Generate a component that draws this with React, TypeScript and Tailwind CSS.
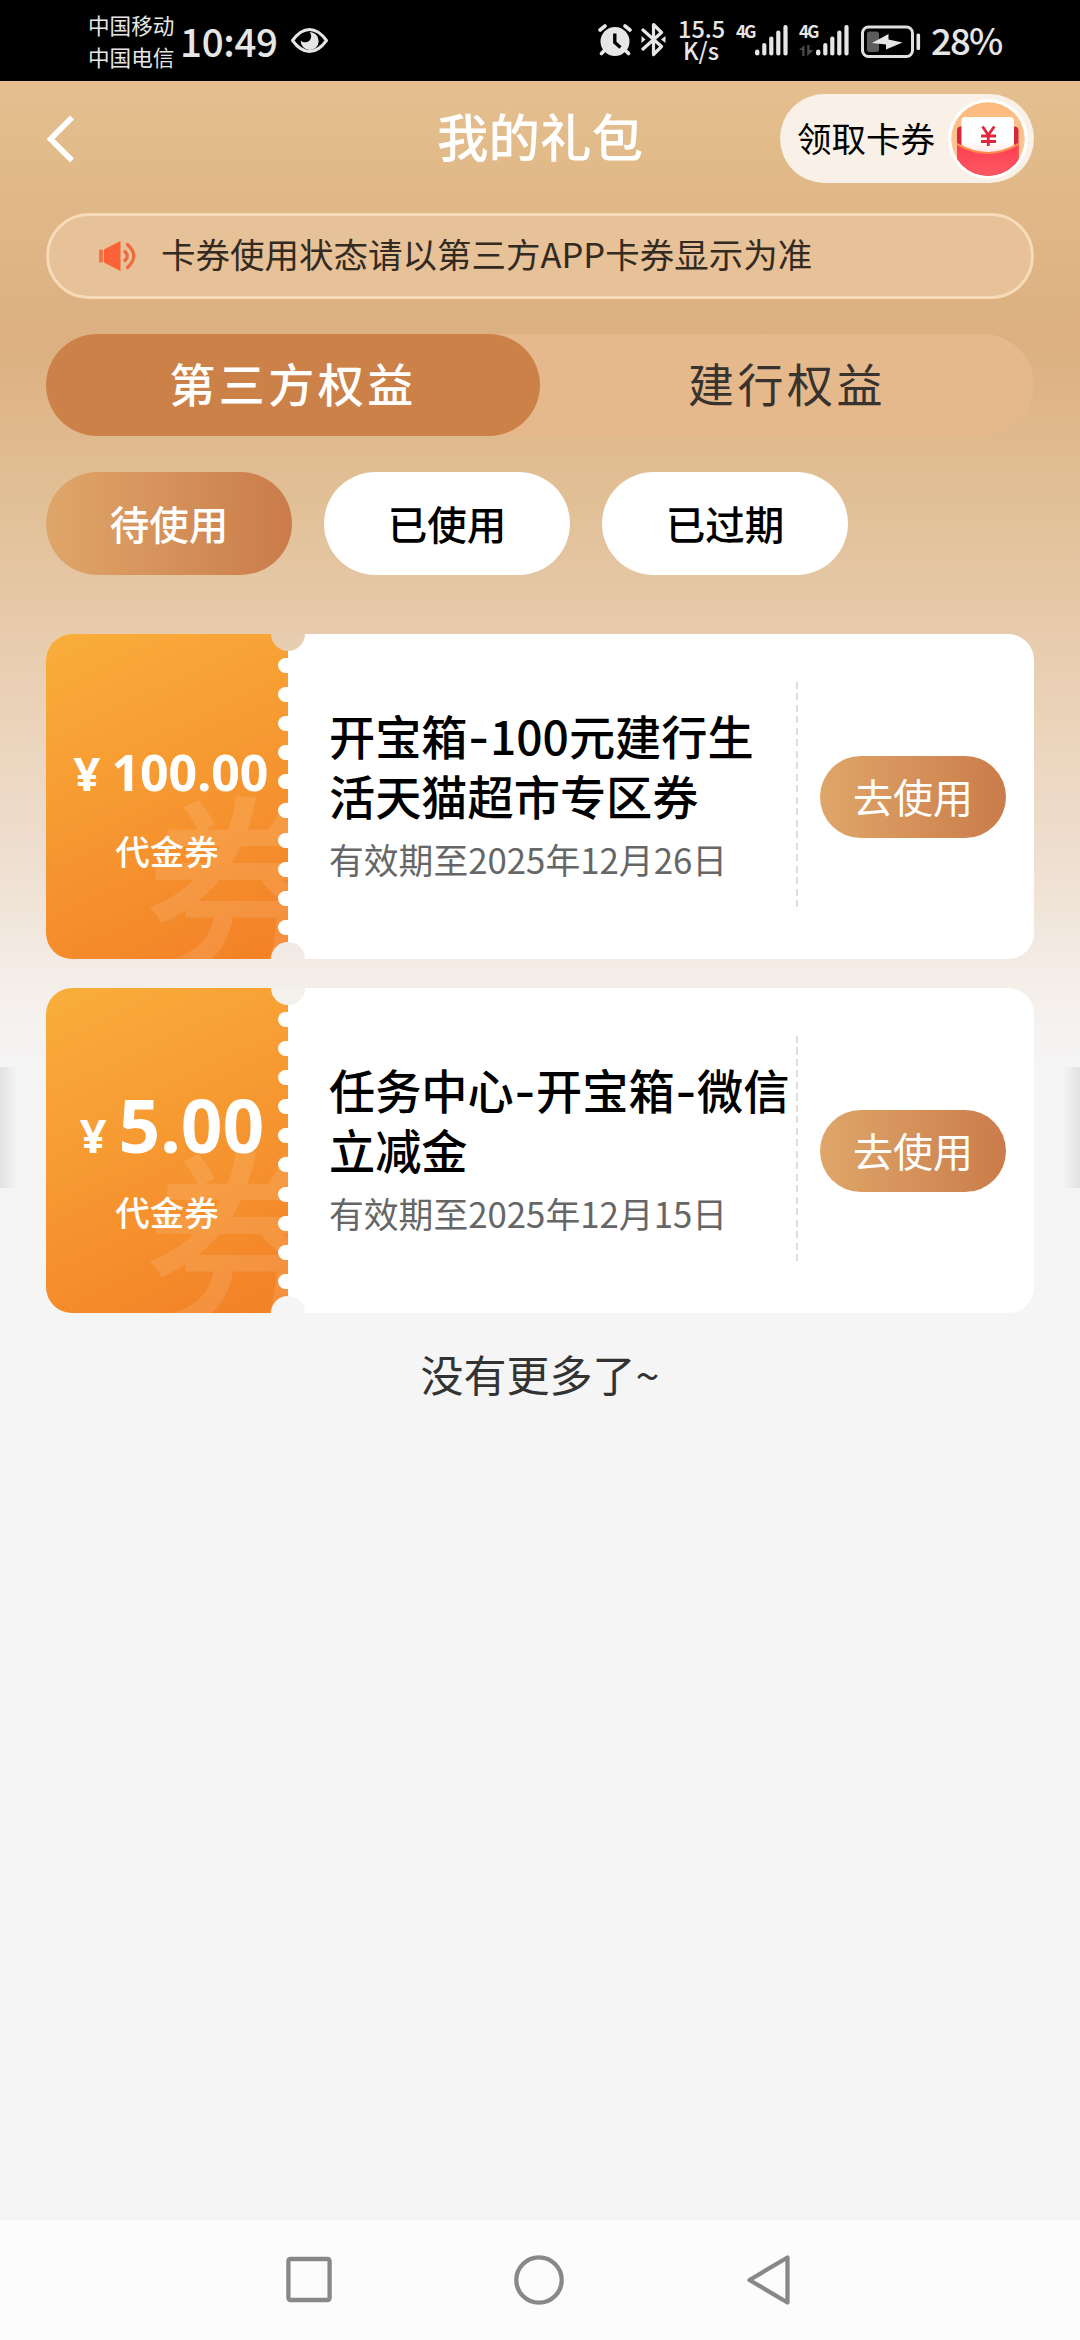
import { FC, Fragment } from 'react';

interface Coupon {
    id: number;
    amount: string;
    amountClass: string;
    currencyClass: string;
    priceClass: string;
    labelClass: string;
    title: string[];
    expiry: string;
    notchTop: string;
    notchBottom: string;
}

const COUPONS: Coupon[] = [
    {
        id: 1,
        amount: '100.00',
        amountClass: 'text-[50px]',
        currencyClass: 'mr-[11px]',
        priceClass: 'pt-[113px] pl-[8px]',
        labelClass: 'top-[196px]',
        title: ['开宝箱-100元建行生', '活天猫超市专区券'],
        expiry: '有效期至2025年12月26日',
        notchTop: 'bg-[#e8ceb0]',
        notchBottom: 'bg-[#f2eae4]',
    },
    {
        id: 2,
        amount: '5.00',
        amountClass: 'text-[73px]',
        currencyClass: 'mr-[12px]',
        priceClass: 'pt-[100px] pl-[10px]',
        labelClass: 'top-[203px]',
        title: ['任务中心-开宝箱-微信', '立减金'],
        expiry: '有效期至2025年12月15日',
        notchTop: 'bg-[#f4f0ec]',
        notchBottom: 'bg-[#f5f5f5]',
    },
];

const FILTERS = ['待使用', '已使用', '已过期'];

const SignalBars: FC = () => (
    <svg width="33" height="31" viewBox="0 0 33 31" fill="#e6e6e6">
        <rect x="0" y="24.5" width="4.4" height="6" rx="2.2" />
        <rect x="7.2" y="18" width="4.2" height="12.5" rx="2" />
        <rect x="14.2" y="11.5" width="4.2" height="19" rx="2" />
        <rect x="21.2" y="5.5" width="4.2" height="25" rx="2" />
        <rect x="28.4" y="0" width="4.2" height="30.5" rx="2" />
    </svg>
);

const StatusBar: FC = () => (
    <div className="flex h-[81px] items-start bg-black pl-[88px] text-[#e6e6e6]">
        <div className="w-[92px] pt-[9px] text-[21.6px] leading-[32px] whitespace-nowrap">
            <div>中国移动</div>
            <div>中国电信</div>
        </div>
        <div className="w-[110px] pt-[20px] text-[38.5px] leading-[40px] font-medium tracking-[-0.3px] whitespace-nowrap">
            10:49
        </div>
        <svg className="mt-[27px]" width="39" height="27" viewBox="0 0 39 27">
            <path d="M2.5 13.5 C8 6 14 2.5 19.5 2.5 C25 2.5 31 6 36.5 13.5 C31 21 25 24.5 19.5 24.5 C14 24.5 8 21 2.5 13.5Z" fill="none" stroke="#e6e6e6" strokeWidth="3" strokeLinejoin="round" />
            <path d="M19.5 5 a9 9 0 1 1 -8.8 8.5 a4.8 4.8 0 0 0 8.8 -8.5Z" fill="#e6e6e6" />
        </svg>
        <svg className="mt-[24px] ml-[269px]" width="34" height="32" viewBox="0 0 34 32">
            <circle cx="17" cy="17.5" r="14.5" fill="#e6e6e6" />
            <path d="M2 6 L7 2 M32 6 L27 2 M7 26 L3.5 29.5 M27 26 L30.5 29.5" stroke="#e6e6e6" strokeWidth="3.6" strokeLinecap="round" />
            <path d="M16.8 9.5 V18.5 L22.5 23.5" fill="none" stroke="#000" strokeWidth="3.4" />
        </svg>
        <svg className="mt-[22px] ml-[9px]" width="25" height="35" viewBox="0 0 25 35">
            <path d="M2 8 L20.5 24.5 L12.5 32.5 V2.5 L20.5 10.5 L2 27" fill="none" stroke="#e6e6e6" strokeWidth="3.2" strokeLinejoin="round" strokeLinecap="round" />
            <path d="M0.5 14 L4.5 17.5 L0.5 21Z M24.5 14 L20 17.5 L24.5 21Z" fill="#e6e6e6" />
        </svg>
        <div className="ml-[12px] w-[46px] pt-[18px] text-center text-[23.5px] leading-[21.5px] font-medium whitespace-nowrap">
            <div>15.5</div>
            <div>K/s</div>
        </div>
        <div className="ml-[12px] flex w-[52px] pt-[25px]">
            <div className="h-[14px] w-[19px] text-[17px] leading-[12px] font-bold tracking-[-1.8px]">4G</div>
            <SignalBars />
        </div>
        <div className="relative ml-[11px] flex w-[50px] pt-[25px]">
            <div className="h-[14px] w-[17px] text-[17px] leading-[12px] font-bold tracking-[-1.8px]">4G</div>
            <SignalBars />
            <svg className="absolute top-[45px] left-0" width="15" height="11" viewBox="0 0 15 11" fill="#4a4a4a">
                <path d="M0 5 L5.5 0 V11 H3.2 V5Z M8.2 0 H10.5 V5 H14.5 L8.2 11Z" />
            </svg>
        </div>
        <svg className="mt-[25px] ml-[12px]" width="60" height="33" viewBox="0 0 60 33">
            <rect x="1.5" y="2" width="50" height="29.5" rx="6" fill="none" stroke="#e0e0e0" strokeWidth="3" />
            <rect x="6" y="6.5" width="12" height="20.5" rx="2.5" fill="#5c5c5c" />
            <path d="M11 18 L27.5 9 V14.5 L41.5 17.5 L25 24.5 V19.5Z" fill="#e6e6e6" />
            <rect x="55.5" y="8.5" width="3.6" height="16.5" rx="1.5" fill="#e6e6e6" />
        </svg>
        <div className="ml-[10px] pt-[20px] text-[36.5px] leading-[40px] font-medium tracking-[-1.8px]">28%</div>
    </div>
);

const RedPacketIcon: FC = () => (
    <svg width="80" height="80" viewBox="0 0 80 80">
        <defs>
            <clipPath id="packet-clip">
                <circle cx="40" cy="40" r="36.8" />
            </clipPath>
            <linearGradient id="packet-bg" x1="0" y1="0" x2="0" y2="1">
                <stop offset="0" stopColor="#fbb879" />
                <stop offset="1" stopColor="#fccfa6" />
            </linearGradient>
            <linearGradient id="packet-card" x1="0" y1="0" x2="0" y2="1">
                <stop offset="0.6" stopColor="#ffffff" />
                <stop offset="1" stopColor="#ffdfe0" />
            </linearGradient>
            <linearGradient id="packet-front" x1="0" y1="0" x2="0" y2="1">
                <stop offset="0" stopColor="#fb3f50" />
                <stop offset="1" stopColor="#fd5a66" />
            </linearGradient>
        </defs>
        <circle cx="40" cy="40" r="40" fill="#fff" />
        <g clipPath="url(#packet-clip)">
            <rect width="80" height="80" fill="url(#packet-bg)" />
            <path d="M9 31 Q9 27.5 13 27.5 H66 Q70.5 27.5 70.5 31 V80 H9Z" fill="#d8273c" />
            <rect x="13.5" y="18" width="52.5" height="40" rx="4" fill="url(#packet-card)" />
            <path d="M9 44.5 Q40 63 70.5 44.5 V80 H9Z" fill="url(#packet-front)" />
            <path d="M9 45 Q40 63 70.5 45" fill="none" stroke="#fd8a4c" strokeWidth="2.2" />
        </g>
        <path d="M34.5 27.5 L40.3 36 L46.3 27.5 M40.3 36 V47 M33 37 H48 M33 42.5 H48" fill="none" stroke="#e0283c" strokeWidth="2.8" />
    </svg>
);

const Header: FC = () => (
    <div className="grid h-[115px] grid-cols-[1fr_auto_1fr] items-center pr-[46px] pl-[46px]">
        <svg width="29" height="48" viewBox="0 0 29 48">
            <path d="M26 2.5 L4.5 24 L26 45.5" fill="none" stroke="#fff" strokeWidth="5.6" />
        </svg>
        <h1 className="pb-[8px] text-[51.5px] leading-none font-medium text-white">我的礼包</h1>
        <button className="flex h-[89px] w-[254px] items-center justify-between justify-self-end rounded-full bg-[#f9f1e8] pr-[6px] pl-[17px]">
            <span className="pb-[2px] text-[34.5px] leading-none text-black">领取卡券</span>
            <RedPacketIcon />
        </button>
    </div>
);

const Notice: FC = () => (
    <div className="mx-[46px] mt-[17px] flex h-[86px] items-center rounded-full border-[3px] border-[#f7dbb9] bg-[#e7c197] pl-[49px]">
        <svg width="39" height="32" viewBox="0 0 39 32">
            <rect x="1" y="9.5" width="4" height="13" rx="1" fill="#f4714a" />
            <path d="M6 9.5 L22.5 1 V31 L6 22.5Z" fill="#fc6138" />
            <path d="M27 11.5 Q31.5 16 27 20.5 M29.5 4.5 Q42 16 29.5 27.5" fill="none" stroke="#ee6a42" strokeWidth="3.2" strokeLinecap="round" />
        </svg>
        <span className="ml-[24px] pb-[5px] text-[34.5px] leading-none text-[#332a22]">卡券使用状态请以第三方APP卡券显示为准</span>
    </div>
);

const Tabs: FC = () => (
    <div className="mx-[46px] mt-[35px] flex h-[102px] rounded-full bg-[#e5b98c] text-[46px] leading-none tracking-[3.5px]">
        <button className="flex-1 rounded-full bg-[#cc8149] pb-[7px] font-medium text-white">第三方权益</button>
        <button className="flex-1 pb-[7px] text-[#38332e]">建行权益</button>
    </div>
);

const Filters: FC = () => (
    <div className="mt-[36px] flex gap-[32px] px-[46px]">
        {FILTERS.map((label, index) => (
            <button
                key={label}
                className={`h-[103px] w-[246px] rounded-full pb-[1px] text-[39.5px] leading-none font-medium
              ${index === 0
                        ? 'bg-linear-to-r from-[#dfa669] to-[#ca7c4a] text-white'
                        : 'bg-white text-black'
                    }`}
            >
                {label}
            </button>
        ))}
    </div>
);

const TitleLine: FC<{ text: string }> = ({ text }) => (
    <div className="h-[60px]">
        {text.split('-').map((part, index) => (
            <Fragment key={index}>
                {index > 0 && <span className="px-[0.5px] font-['Inter'] leading-none">-</span>}
                {part}
            </Fragment>
        ))}
    </div>
);

const CouponCard: FC<{ coupon: Coupon }> = ({ coupon }) => (
    <div className="relative flex h-[325px] overflow-hidden rounded-[26px] bg-white">
        <div className="relative w-[242px] overflow-hidden bg-linear-[155deg] from-[#f9ae3b] to-[#f38026] text-white">
            <div className="absolute top-[146px] left-[98px] text-[195px] leading-[195px] font-medium text-white/11">券</div>
            <div className={`relative flex flex-col items-center ${coupon.priceClass}`}>
                <div className="flex items-baseline font-['Noto_Sans'] leading-none font-bold whitespace-nowrap">
                    <span className={`text-[47px] ${coupon.currencyClass}`}>¥</span>
                    <span className={coupon.amountClass}>{coupon.amount}</span>
                </div>
            </div>
            <div className={`absolute left-0 w-full text-center text-[34.5px] leading-[40px] font-medium ${coupon.labelClass}`}>
                代金券
            </div>
            <div className="absolute top-[24px] left-[231.5px] flex flex-col gap-[14.1px]">
                {Array.from({ length: 10 }, (_, i) => (
                    <span key={i} className="h-[15px] w-[20px] rounded-full bg-white" />
                ))}
            </div>
        </div>
        <div className={`absolute top-[-17px] left-[225px] size-[34px] rounded-full ${coupon.notchTop}`} />
        <div className={`absolute bottom-[-17px] left-[225px] size-[34px] rounded-full ${coupon.notchBottom}`} />
        <div className="w-[508px] pt-[71px] pl-[41px] whitespace-nowrap">
            <div className="text-[46.2px] leading-[60px] font-medium text-black">
                {coupon.title.map((line) => (
                    <TitleLine key={line} text={line} />
                ))}
            </div>
            <div className="mt-[14px] text-[34.8px] leading-[40px] text-[#666]">{coupon.expiry}</div>
        </div>
        <div className="mt-[48px] h-[227px] w-[2px] bg-[repeating-linear-gradient(180deg,#dedede_0_7px,transparent_7px_11.5px)]" />
        <button className="mt-[122px] ml-[22px] h-[82px] w-[186px] rounded-full bg-linear-to-r from-[#dfa669] to-[#ca7c4a] pb-[3px] text-[40px] leading-none text-white">
            去使用
        </button>
    </div>
);

const NavBar: FC = () => (
    <div className="flex h-[120px] items-center justify-between bg-[#fcfcfc] pr-[288px] pl-[284px]">
        <svg width="50" height="54" viewBox="0 0 50 54" fill="none" stroke="#888" strokeWidth="4.3">
            <rect x="4.4" y="6" width="41.2" height="41" rx="2" />
        </svg>
        <svg width="54" height="54" viewBox="0 0 54 54" fill="none" stroke="#888" strokeWidth="4.3">
            <circle cx="27" cy="27" r="22.7" />
        </svg>
        <svg width="48" height="54" viewBox="0 0 48 54" fill="none" stroke="#888" strokeWidth="4.3" strokeLinejoin="round">
            <path d="M43.5 4.5 V49.5 L5.5 27Z" />
        </svg>
    </div>
);

export default function App() {
    return (
        <div className="flex h-[2340px] w-[1080px] flex-col overflow-hidden bg-[#f5f5f5] font-['Noto_Sans_CJK_SC',sans-serif]">
            <StatusBar />
            <main className="relative flex-1 bg-[linear-gradient(180deg,#e5bf8f_0,#e0b888_120px,#dcb080_260px,#dfb88c_340px,#e2c198_430px,#e5c6a4_500px,#e9cfb2_590px,#ecd5bd_660px,#eedfd0_780px,#f3eae2_870px,#f5f0ec_920px,#f5f5f5_985px)]">
                <Header />
                <Notice />
                <Tabs />
                <Filters />
                <div className="mt-[59px] flex flex-col gap-[29px] px-[46px]">
                    {COUPONS.map((coupon) => (
                        <CouponCard key={coupon.id} coupon={coupon} />
                    ))}
                </div>
                <p className="mt-[34px] text-center text-[43px] leading-[52px] text-[#333]">没有更多了~</p>
                {/* edge shadows */}
                <div className="absolute top-[986px] left-0 h-[121px] w-[18px] bg-linear-to-r from-[#e2e2e2] to-[#f5f5f5]" />
                <div className="absolute top-[986px] right-0 h-[121px] w-[18px] bg-linear-to-l from-[#e2e2e2] to-[#f5f5f5]" />
            </main>
            <NavBar />
        </div>
    );
}
